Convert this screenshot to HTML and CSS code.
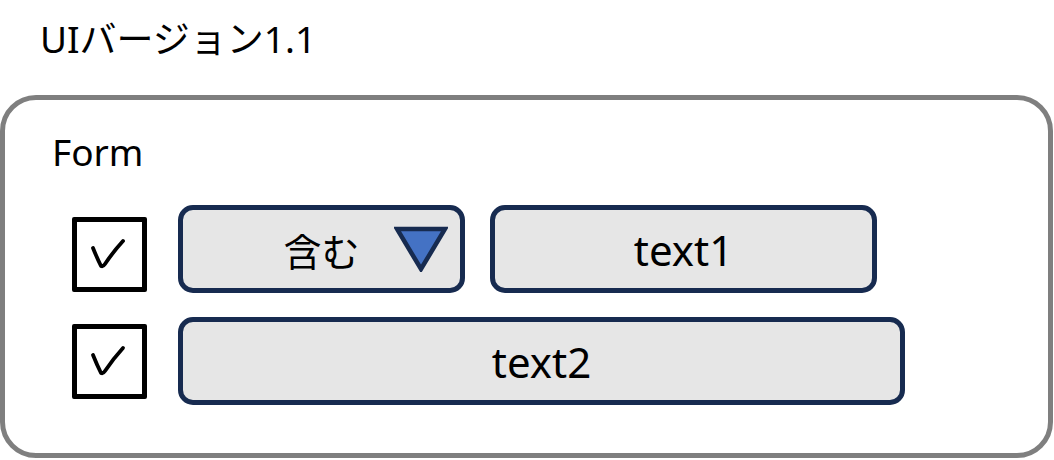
FILE: index.html
```html
<!DOCTYPE html>
<html lang="ja">
<head>
<meta charset="utf-8">
<title>UIバージョン1.1</title>
<link rel="stylesheet" href="styles.css">
</head>
<body>
<h1 class="title">UIバージョン1.1</h1>
<section class="panel">
  <div class="form-label">Form</div>
  <div class="row row-first">
    <div class="checkbox checkbox-low">
      <svg class="check" width="65" height="65" viewBox="1 1 65 65"><path d="M17 27 Q21 37 25 45 Q27 46 29 43 Q37 31 47 20" fill="none" stroke="#000" stroke-width="3.8" stroke-linecap="round" stroke-linejoin="round"/></svg>
    </div>
    <div class="field select">
      <span class="select-text">含む</span>
      <svg class="caret" width="54" height="46" viewBox="0 0 54 46"><polygon points="3,3 51,3 27,43" fill="#4472c4" stroke="#172b50" stroke-width="4.5" stroke-linejoin="miter"/></svg>
    </div>
    <div class="field text1">text1</div>
  </div>
  <div class="row">
    <div class="checkbox">
      <svg class="check" width="65" height="65" viewBox="1 1 65 65"><path d="M17 27 Q21 37 25 45 Q27 46 29 43 Q37 31 47 20" fill="none" stroke="#000" stroke-width="3.8" stroke-linecap="round" stroke-linejoin="round"/></svg>
    </div>
    <div class="field text2">text2</div>
  </div>
</section>
</body>
</html>
```
FILE: styles.css
```css
html, body {
  margin: 0;
  padding: 0;
  background: #ffffff;
}
body {
  width: 1054px;
  height: 460px;
  overflow: hidden;
  font-family: "Noto Sans", "Noto Sans CJK JP", sans-serif;
  color: #000;
}
.title {
  margin: 0;
  padding: 19px 0 0 40px;
  font-size: 37px;
  font-weight: 400;
  line-height: 40px;
  height: 77px;
  box-sizing: border-box;
}
.panel {
  box-sizing: border-box;
  width: 1053px;
  height: 363px;
  margin-top: 18px;
  border: 5px solid #7f7f7f;
  border-radius: 36px;
  padding: 34px 0 0 47px;
}
.form-label {
  font-size: 37px;
  line-height: 36px;
  margin-bottom: 35px;
}
.row {
  display: flex;
  align-items: center;
  margin-left: 20px;
}
.row + .row {
  margin-top: 24px;
}
.checkbox {
  box-sizing: border-box;
  width: 75px;
  height: 75px;
  border: 5px solid #000;
  border-radius: 2px;
  display: flex;
  margin-right: 31px;
}
.checkbox-low {
  margin-top: 10px;
}
.check {
  display: block;
}
.field {
  box-sizing: border-box;
  height: 88px;
  border: 5px solid #172b50;
  border-radius: 15px;
  background: #e6e6e6;
  font-size: 42px;
  display: flex;
  align-items: center;
  justify-content: center;
}
.select {
  width: 287px;
  display: grid;
  grid-template-columns: 1fr auto 1fr;
  align-items: center;
}
.select-text {
  grid-column: 2;
  font-size: 38px;
}
.caret {
  grid-column: 3;
  justify-self: end;
  margin-right: 12px;
  display: block;
}
.text1 {
  width: 387px;
  margin-left: 25px;
}
.text2 {
  width: 727px;
}
```
